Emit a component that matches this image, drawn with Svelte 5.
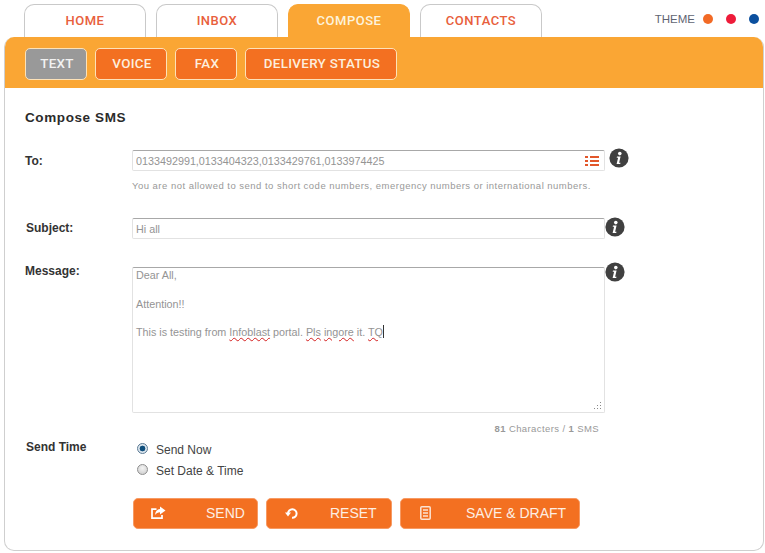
<script>
	const tabs = ["HOME", "INBOX", "COMPOSE", "CONTACTS"];
	const subtabs = [
		{ label: "TEXT", w: 62 },
		{ label: "VOICE", w: 72 },
		{ label: "FAX", w: 62 },
		{ label: "DELIVERY STATUS", w: 152 },
	];
	const themes = ["#f26a25", "#ee1c3a", "#0b4f9e"];
</script>

{#snippet info()}
	<svg class="info" viewBox="0 0 20 20" width="20" height="20">
		<circle cx="10" cy="10" r="9.6" fill="#404040" />
		<circle cx="10.8" cy="5.6" r="1.8" fill="#fff" />
		<path d="M8 8.6h3.6l-1.5 6.2h1.4l-.3 1.2H7.6l1.5-6.2H7.7z" fill="#fff" />
	</svg>
{/snippet}

<main>
	<header class="top">
		<nav class="tabs">
			{#each tabs as tab}
				<a class="tab" class:active={tab === "COMPOSE"} href="#/">{tab}</a>
			{/each}
		</nav>
		<div class="theme">
			<span>THEME</span>
			{#each themes as color}
				<i style:background={color}></i>
			{/each}
		</div>
	</header>

	<section class="panel">
		<div class="subbar">
			{#each subtabs as sub}
				<button class="sub" class:current={sub.label === "TEXT"} style:width="{sub.w}px">{sub.label}</button>
			{/each}
		</div>

		<div class="body">
			<h2>Compose SMS</h2>

			<div class="row to">
				<label for="to">To:</label>
				<div class="field">
					<div class="inputwrap">
						<input id="to" value="0133492991,0133404323,0133429761,0133974425" />
						<svg class="listicon" viewBox="0 0 14 10" width="14" height="10">
							<path d="M0 1h3M5 1h9M0 5h3M5 5h9M0 9h3M5 9h9" stroke="#e2572b" stroke-width="2" fill="none" />
						</svg>
					</div>
					<p class="hint">You are not allowed to send to short code numbers, emergency numbers or international numbers.</p>
				</div>
				{@render info()}
			</div>

			<div class="row subject">
				<label for="subject">Subject:</label>
				<div class="field"><input id="subject" value="Hi all" /></div>
				{@render info()}
			</div>

			<div class="row message">
				<span class="lbl">Message:</span>
				<div class="field">
					<div class="textarea" role="textbox" aria-multiline="true" tabindex="0">
						<div>Dear All,</div>
						<div>&nbsp;</div>
						<div>Attention!!</div>
						<div>&nbsp;</div>
						<div>This is testing from <u>Infoblast</u> portal. <u>Pls</u> <u>ingore</u> it. <u>TQ</u><span class="caret"></span></div>
						<svg class="grip" viewBox="0 0 9 9" width="9" height="9">
							<path d="M7 1h1v1H7zM7 4h1v1H7zM4 4h1v1H4zM7 7h1v1H7zM4 7h1v1H4zM1 7h1v1H1z" fill="#8a8a8a" />
						</svg>
					</div>
					<p class="count"><b>81</b> Characters / <b>1</b> SMS</p>
				</div>
				{@render info()}
			</div>

			<div class="row time">
				<span class="lbl">Send Time</span>
				<div class="radios">
					<div class="radio"><span class="dot on"></span>Send Now</div>
					<div class="radio"><span class="dot"></span>Set Date &amp; Time</div>
				</div>
			</div>

			<div class="actions">
				<button class="act send">
					<svg viewBox="0 0 16 14" width="16" height="14">
						<path d="M6.5 3.2H2v9h10V9" fill="none" stroke="#fff" stroke-width="1.7" />
						<path d="M10 0.5l5.5 4-5.5 4V6.2C8 6.2 6.3 7 5.2 9 5.2 5.8 7 3.2 10 3z" fill="#fff" />
					</svg>
					<span>SEND</span>
				</button>
				<button class="act reset">
					<svg viewBox="0 0 14 14" width="14" height="14">
						<path d="M3 7.5A4.3 4.3 0 1 1 7 11.8" fill="none" stroke="#fff" stroke-width="2" />
						<path d="M0 6.5h6L3 10.4z" fill="#fff" />
					</svg>
					<span>RESET</span>
				</button>
				<button class="act save">
					<svg viewBox="0 0 11 14" width="11" height="14">
						<rect x="0.8" y="0.8" width="9.4" height="12.4" rx="1" fill="none" stroke="#fbe3d3" stroke-width="1.5" />
						<path d="M3 4h5M3 7h5M3 10h5" stroke="#fbe3d3" stroke-width="1.3" />
					</svg>
					<span>SAVE &amp; DRAFT</span>
				</button>
			</div>
		</div>
	</section>
</main>

<style>
	:global(body) {
		background: #fff;
		font-family: "Liberation Sans", Arial, sans-serif;
	}
	main {
		width: 765px;
		height: 553px;
		box-sizing: border-box;
		padding: 4px 1px 0 4px;
		overflow: hidden;
	}
	.top {
		display: flex;
		justify-content: space-between;
		height: 33px;
		padding: 0 5px 0 20px;
	}
	.tabs {
		display: flex;
		gap: 10px;
	}
	.tab {
		width: 122px;
		height: 33px;
		box-sizing: border-box;
		border: 1px solid #c9c9c9;
		border-bottom: 0;
		border-radius: 10px 10px 0 0;
		text-align: center;
		font: 500 13px/31px Roboto, sans-serif;
		letter-spacing: 0.5px;
		color: #e8603c;
		text-decoration: none;
	}
	.tab.active {
		background: #faa634;
		border-color: #faa634;
		color: #fdf3dc;
	}
	.theme {
		display: flex;
		align-items: center;
		height: 29px;
		font-size: 11.5px;
		color: #5f6472;
	}
	.theme span {
		margin-right: 8px;
	}
	.theme i {
		width: 10px;
		height: 10px;
		border-radius: 50%;
		margin-right: 13px;
	}
	.theme i:last-child {
		margin-right: 0;
	}
	.panel {
		width: 760px;
		height: 514px;
		box-sizing: border-box;
		border-radius: 10px;
		border: 1px solid #cfcfcf;
		border-top: 0;
		overflow: hidden;
	}
	.subbar {
		display: flex;
		gap: 8px;
		height: 51px;
		box-sizing: border-box;
		margin: 0 -1px;
		padding: 11px 21px 0;
		background: #faa634;
	}
	.sub {
		height: 32px;
		padding: 0 0 0 2px;
		background: #f37021;
		border: 1px solid #fde2b8;
		border-radius: 5px;
		color: #fdeedd;
		font: 500 13.4px/30px Roboto, sans-serif;
		letter-spacing: 0.3px;
	}
	.sub.current {
		background: #999;
		color: #f2f2f2;
	}
	.body {
		padding: 22px 0 0 20px;
	}
	h2 {
		margin: 0 0 24px;
		font-size: 13.5px;
		line-height: 16px;
		font-weight: 700;
		letter-spacing: 0.6px;
		color: #2b2b2b;
	}
	.row {
		display: flex;
		align-items: flex-start;
	}
	.row label,
	.lbl {
		width: 107px;
		flex: none;
		font-size: 12px;
		line-height: 14px;
		font-weight: 700;
		color: #333;
	}
	.to label {
		padding-top: 4px;
	}
	.subject {
		margin-top: 26px;
	}
	.subject label {
		padding: 3px 0 0 1px;
		width: 106px;
	}
	.message {
		margin-top: 28px;
	}
	.message .lbl {
		margin-top: -3px;
	}
	.time {
		margin-top: 4px;
	}
	.time .lbl {
		padding: 1px 0 0 1px;
		width: 106px;
	}
	.field {
		width: 473px;
		flex: none;
	}
	.inputwrap {
		position: relative;
	}
	input,
	.textarea {
		display: block;
		width: 100%;
		box-sizing: border-box;
		border: 1px solid #e2e2e2;
		border-top: 1px solid #a8a8a8;
		border-radius: 2px;
		font-family: "Liberation Sans", Arial, sans-serif;
		font-size: 10.78px;
		color: #949494;
		outline: none;
	}
	input {
		height: 21px;
		padding: 0 3px;
	}
	.listicon {
		position: absolute;
		right: 6px;
		top: 6px;
	}
	.hint {
		margin: 9px 0 0;
		font-size: 9.5px;
		line-height: 12px;
		letter-spacing: 0.48px;
		color: #999;
	}
	.info {
		flex: none;
		margin-top: -1px;
	}
	.to .info {
		margin-left: 4px;
		margin-top: -2px;
	}
	.message .info {
		margin-top: -5px;
	}
	.textarea {
		position: relative;
		height: 146px;
		padding: 0 3px;
		line-height: 14.3px;
		white-space: nowrap;
	}
	.textarea u {
		text-decoration: underline wavy #d42020 1px;
		text-underline-offset: 1px;
	}
	.caret {
		display: inline-block;
		width: 1px;
		height: 13px;
		background: #333;
		vertical-align: -2px;
	}
	.grip {
		position: absolute;
		right: 2px;
		bottom: 2px;
	}
	.count {
		margin: 10px 6px 0 0;
		text-align: right;
		font-size: 9.5px;
		line-height: 12px;
		letter-spacing: 0.4px;
		color: #999;
	}
	.radios {
		padding: 0 0 0 5px;
	}
	.radio {
		display: flex;
		align-items: center;
		height: 21px;
		font-size: 12px;
		color: #444;
	}
	.dot {
		width: 11px;
		height: 11px;
		box-sizing: border-box;
		margin: -2px 8px 0 0;
		border: 1px solid #8f8f8f;
		border-radius: 50%;
		background: radial-gradient(circle at 50% 35%, #f4f4f4, #c9c9c9);
	}
	.dot.on {
		border-color: #5b7a94;
		background: radial-gradient(circle, #0f4e7c 0 2.6px, #dce6ee 3.2px);
	}
	.actions {
		display: flex;
		gap: 8px;
		margin: 17px 0 0 108px;
	}
	.act {
		display: flex;
		align-items: center;
		height: 31px;
		padding: 0 0 2px;
		box-sizing: border-box;
		background: #f37021;
		border: 1px solid #f79a63;
		border-radius: 5px;
		color: #fdeee3;
		font-family: "Liberation Sans", Arial, sans-serif;
		font-size: 14px;
	}
	.act svg {
		flex: none;
	}
	.send {
		width: 125px;
		padding-left: 16px;
	}
	.send span {
		margin-left: 40px;
	}
	.reset {
		width: 126px;
		padding-left: 18px;
	}
	.reset span {
		margin-left: 31px;
	}
	.save {
		width: 180px;
		padding-left: 19px;
	}
	.save span {
		margin-left: 35px;
	}
</style>
